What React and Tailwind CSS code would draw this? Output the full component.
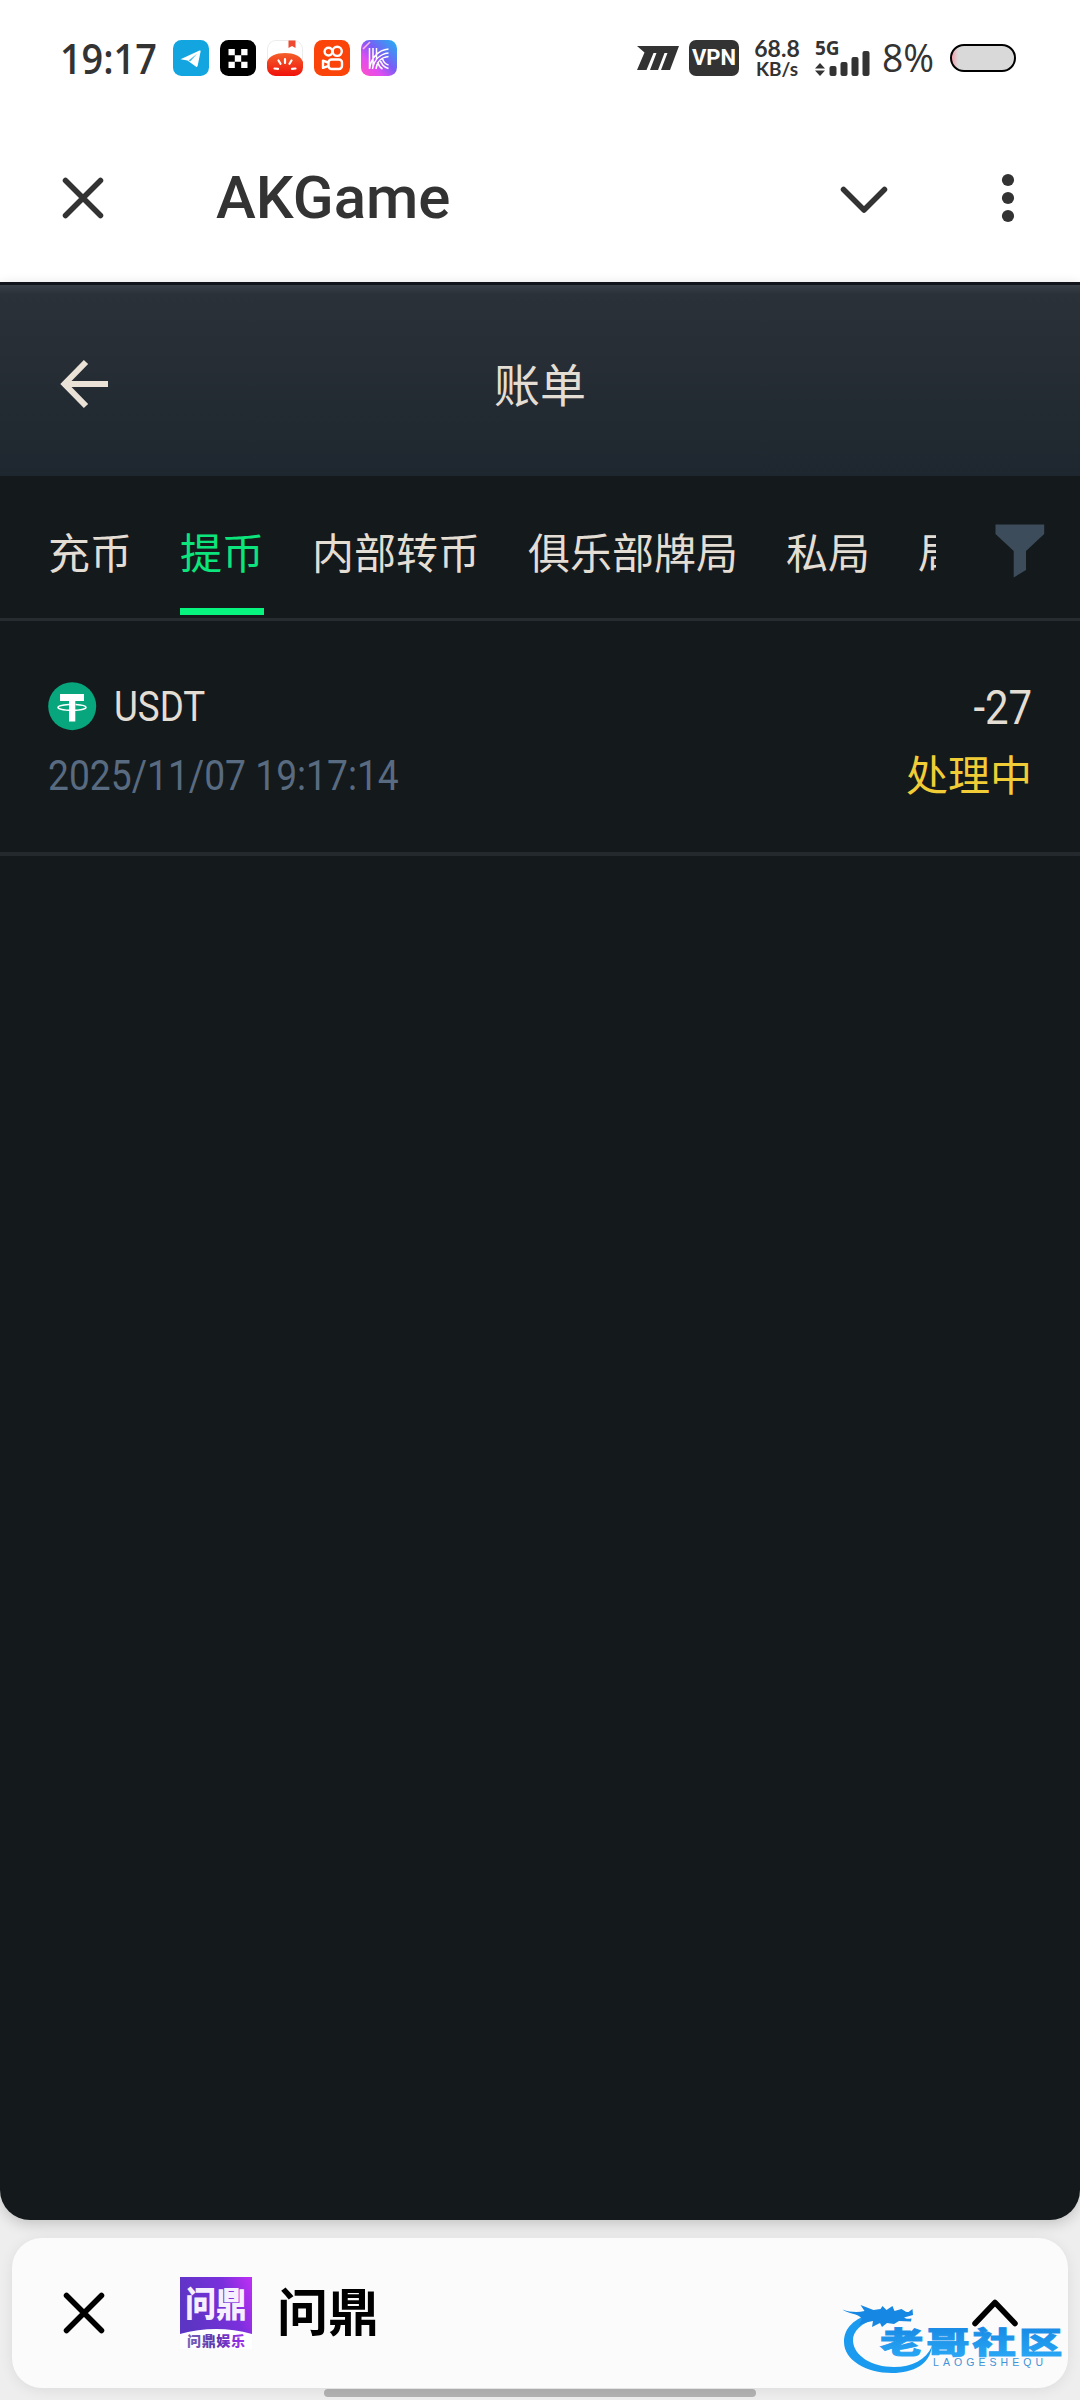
import { useState } from 'react';

const tabs = ['充币', '提币', '内部转币', '俱乐部牌局', '私局', '局'];

const records = [
  { id: 1, coin: 'USDT', time: '2025/11/07 19:17:14', amount: '-27', status: '处理中' },
];

function TelegramIcon() {
  return (
    <svg width="36" height="36" viewBox="0 0 36 36">
      <rect width="36" height="36" rx="8.5" fill="#12a5e0" />
      <path d="M7.5 19.2 26.5 10.6c.8-.3 1.3.1 1.1 1l-3 14.500c-.2.8-.8 1-1.500.6L14.500 20.600z" fill="#fff" />
      <path d="M15.500 20.500 24 13.800 17.600 21.200z" fill="#12a5e0" opacity=".75" />
    </svg>
  );
}

function OkxIcon() {
  return (
    <svg width="36" height="36" viewBox="0 0 36 36">
      <rect width="36" height="36" rx="8.5" fill="#000" />
      <path d="M8.500 9h6.300v6.300H8.500zM21.200 9h6.300v6.300h-6.300zM14.800 15.300h6.400v6.400h-6.400zM8.500 21.700h6.300V28H8.500zM21.200 21.700h6.300V28h-6.300z" fill="#fff" />
    </svg>
  );
}

function TomatoIcon() {
  return (
    <svg width="36" height="36" viewBox="0 0 36 36">
      <defs>
        <linearGradient id="tomato" x1="0" y1="0" x2="0" y2="1">
          <stop offset="0" stopColor="#f4602c" />
          <stop offset="1" stopColor="#f0120a" />
        </linearGradient>
      </defs>
      <rect x=".5" y=".5" width="35" height="35" rx="8.5" fill="#fff" stroke="#ececec" />
      <path d="M0 22C2 16 9 13 18 13s16 3 18 9v5.500a8.500 8.500 0 0 1-8.500 8.500h-19A8.500 8.500 0 0 1 0 27.500z" fill="url(#tomato)" />
      <path d="M21.500 .5h7v7.500l-3.500-2-3.500 2z" fill="#ee4a30" />
      <path d="M18 19v4M11.500 20.500l2 3.300M24.500 20.500l-2 3.300M7.500 28.500l3.500.4M28.500 28.500l-3.500.4" stroke="#fff" strokeWidth="2.2" strokeLinecap="round" />
    </svg>
  );
}

function KuaishouIcon() {
  return (
    <svg width="36" height="36" viewBox="0 0 36 36">
      <rect width="36" height="36" rx="8.5" fill="#fb4409" />
      <g fill="none" stroke="#fff" strokeWidth="2.4">
        <circle cx="14.5" cy="11.6" r="3.9" />
        <circle cx="23.2" cy="11.3" r="4.6" />
        <rect x="14.5" y="19.5" width="13.5" height="9.5" rx="3" />
        <path d="M14 22.500 9 20.700v7.200l5-1.800" strokeLinejoin="round" />
      </g>
    </svg>
  );
}

function StripedKIcon() {
  return (
    <svg width="36" height="36" viewBox="0 0 36 36">
      <defs>
        <linearGradient id="stripedK" x1="0" y1="1" x2="1" y2="0">
          <stop offset="0" stopColor="#ff4fc4" />
          <stop offset=".3" stopColor="#e04df0" />
          <stop offset=".55" stopColor="#7a5cf5" />
          <stop offset="1" stopColor="#1fb4f2" />
        </linearGradient>
      </defs>
      <rect width="36" height="36" rx="8.5" fill="url(#stripedK)" />
      <path d="M2 9 9 2" stroke="#ffb3e6" strokeWidth="1.6" />
      <g fill="none" stroke="#fff" strokeWidth="1.5">
        <path d="M8.500 8v21M12 8v18M15.500 8v11M8.500 29C10 18 17 10 27.500 9M11.500 29C13 20 19 14 27.500 13M15 29c1-7.500 6-12 12.500-12.500M19 19.500c1 4 3 7.500 8.500 9M21.500 18c.5 3.500 2.500 6 6 7M16.500 22c1 3 2.500 5.500 5 7" />
      </g>
    </svg>
  );
}

function StatusBar() {
  return (
    <div className="flex h-[116px] items-center pl-[60px] pr-[64px] text-[#333]">
      <div className="flex w-[113px] items-center">
        <span className="origin-left scale-x-[0.9] whitespace-nowrap font-['Open_Sans'] text-[42px] font-semibold leading-none">19:17</span>
      </div>
      <div className="flex gap-[11px]">
        <TelegramIcon />
        <OkxIcon />
        <TomatoIcon />
        <KuaishouIcon />
        <StripedKIcon />
      </div>

      <div className="ml-auto flex items-center">
        <svg width="42" height="24" viewBox="0 0 42 24" fill="#333">
          <path d="M0 0h42l-9 24h-9l6.500-17h-3L21 24h-8l6.500-17h-3L9.500 24H0l7.500-17.500z" />
        </svg>
        <div className="ml-[10px] flex h-9 w-[50px] items-center justify-center rounded-[7px] bg-[#333] font-[Roboto] text-[22px] font-bold leading-none text-white">
          VPN
        </div>
        <div className="ml-[13px] flex w-[50px] flex-col items-center font-[Lato] font-bold leading-none">
          <span className="whitespace-nowrap text-[23px] leading-[20px]">68.8</span>
          <span className="mt-px whitespace-nowrap text-[19px] leading-[19px]">KB/s</span>
        </div>
        <div className="ml-[13px] flex h-9 w-[56px] flex-col">
          <span className="h-4 font-['Open_Sans'] text-[19px] font-bold leading-[16px]">5G</span>
          <svg className="-mt-[6px]" width="55" height="26" viewBox="0 0 55 26" fill="#333">
            <path d="M5 13l5 5.500H0zM5 26l5-5.500H0z" />
            <rect x="14.5" y="16" width="7" height="10" rx="2" />
            <rect x="25.5" y="12" width="7" height="14" rx="2" />
            <rect x="36.5" y="7" width="7" height="19" rx="2" />
            <rect x="47.5" y="1" width="7" height="25" rx="2" />
          </svg>
        </div>
        <div className="ml-[11px] w-[56px]">
          <span className="inline-block origin-left scale-x-[0.98] whitespace-nowrap font-['Open_Sans'] text-[38px] font-medium leading-none">8%</span>
        </div>
        <div className="ml-3 h-7 w-[66px] rounded-full border-[2.5px] border-black bg-gradient-to-r from-[#f0a0ac] from-0% to-[#d9d9d9] to-10%" />
      </div>
    </div>
  );
}

function CloseIcon({ color }) {
  return (
    <svg width="42" height="42" viewBox="0 0 42 42" fill="none" stroke={color} strokeWidth="5.5" strokeLinecap="round">
      <path d="M3.500 3.500l35 35M38.500 3.500l-35 35" />
    </svg>
  );
}

function TitleBar() {
  return (
    <div className="flex h-[166px] items-center pb-0.5 pl-[62px] pr-[65px]">
      <CloseIcon color="#333" />
      <h1 className="ml-[112px] font-[Roboto] text-[60px] font-medium leading-none text-[#333]">AKGame</h1>
      <svg className="ml-auto mt-1" width="48" height="28" viewBox="0 0 48 28" fill="none" stroke="#333" strokeWidth="5.5" strokeLinecap="round" strokeLinejoin="round">
        <path d="M3.500 3.500 24 24 44.500 3.500" />
      </svg>
      <svg className="ml-[113px]" width="14" height="50" viewBox="0 0 14 50" fill="#333">
        <circle cx="7" cy="7" r="6.1" />
        <circle cx="7" cy="25" r="6.1" />
        <circle cx="7" cy="43" r="6.1" />
      </svg>
    </div>
  );
}

function TetherIcon() {
  return (
    <svg width="49" height="49" viewBox="0 0 49 49">
      <circle cx="24.2" cy="24.2" r="24" fill="#07a67c" />
      <path d="M12 12h24v7h-8.700v20.500h-6.300V19h-9z" fill="#fff" />
      <path d="M21 22.500C14 23 10 24 10 25.300c0 1.700 6 3 14 3s14-1.300 14-3c0-1.300-3.500-2.300-10.500-2.800" fill="none" stroke="#fff" strokeWidth="1.5" />
    </svg>
  );
}

function BillPage() {
  const [active, setActive] = useState(1);

  return (
    <main className="flex h-[1938px] flex-col overflow-hidden rounded-b-[30px] border-t-[3px] border-[#12151b] bg-[#14191c] font-[Roboto,'Noto_Sans_CJK_SC',sans-serif] text-[#e3ddd3] shadow-[0_4px_14px_rgba(0,0,0,0.18)]">
      <header className="grid h-[191px] shrink-0 grid-cols-[1fr_auto_1fr] items-center bg-[linear-gradient(180deg,#394047_0px,#2a3138_9px,#262d34_80px,#1e272f_100%)] px-[60px]">
        <svg className="mt-[6px]" width="49" height="50" viewBox="0 0 49 50" fill="none" stroke="#ebe2d7" strokeWidth="6">
          <path d="M26 3 4.500 25 26 47M4.500 25H48" />
        </svg>
        <h2 className="mt-[10px] text-[46px] leading-none">账单</h2>
        <span />
      </header>

      <nav className="flex h-[145px] shrink-0 items-start border-b-[3px] border-[#272c30] pl-12">
        <div className="flex h-[139px] w-[888px] gap-12 overflow-hidden">
          {tabs.map((tab, i) => (
            <button
              key={tab}
              onClick={() => setActive(i)}
              className={
                i === active
                  ? 'h-full shrink-0 border-b-[7px] border-[#07f57f] pt-[25px] text-[42px] leading-none text-[#0be57c]'
                  : 'h-full shrink-0 border-b-[7px] border-transparent pt-[25px] text-[42px] leading-none'
              }
            >
              {tab}
            </button>
          ))}
        </div>
        <svg className="ml-[59px] mt-12" width="50" height="54" viewBox="0 0 50 54" fill="#3c4c5b">
          <path d="M.5.500h48.700v9.500L31 27v19L18.700 53.500V27L.5 10z" />
        </svg>
      </nav>

      {records.map((r) => (
        <div key={r.id} className="flex h-[235px] shrink-0 justify-between border-b-4 border-[#24292d] px-12 pt-[61px]">
          <div className="flex flex-col">
            <div className="flex h-[49px] items-center gap-[17px]">
              <TetherIcon />
              <span className="origin-left scale-x-[0.875] text-[42px] leading-none">{r.coin}</span>
            </div>
            <span className="mt-5 origin-left scale-x-[0.886] whitespace-nowrap text-[42px] leading-[50px] text-[#596b80]">{r.time}</span>
          </div>
          <div className="flex flex-col items-end">
            <span className="mt-px origin-right scale-x-[0.875] text-[48px] leading-[49px]">{r.amount}</span>
            <span className="mt-5 text-[42px] leading-[50px] text-[#f0cd36]">{r.status}</span>
          </div>
        </div>
      ))}
    </main>
  );
}

function AppBadge() {
  return (
    <svg width="72" height="72" viewBox="0 0 72 72" fontFamily="Noto Sans CJK SC, sans-serif" fontWeight="900" textAnchor="middle">
      <defs>
        <linearGradient id="badge" x1="0" y1=".3" x2="1" y2="0">
          <stop offset="0" stopColor="#5d35c4" />
          <stop offset=".6" stopColor="#7a2fdc" />
          <stop offset="1" stopColor="#c02ff5" />
        </linearGradient>
        <linearGradient id="badgeText">
          <stop offset="0" stopColor="#7a66b8" />
          <stop offset=".5" stopColor="#5a35b0" />
          <stop offset="1" stopColor="#a030f0" />
        </linearGradient>
      </defs>
      <rect width="72" height="72" fill="#fff" />
      <path d="M0 0h72v57Q36 47 0 57z" fill="url(#badge)" />
      <g transform="translate(36 39.5) scale(.93 1.06)">
        <text fontSize="33" fill="#f6effd">问鼎</text>
      </g>
      <text x="36" y="68.5" fontSize="14" textLength="58" fill="url(#badgeText)">问鼎娱乐</text>
    </svg>
  );
}

function Watermark() {
  return (
    <svg width="224" height="80" viewBox="0 0 224 80">
      <defs>
        <linearGradient id="mark" x1="0" y1="0" x2="0" y2="1">
          <stop offset="0" stopColor="#1482e0" />
          <stop offset="1" stopColor="#2aaaf6" />
        </linearGradient>
      </defs>
      <path d="M32 13C12 18 2 28 2 42c0 18 22 31 48 31 22 0 38-9 40-27-6 14-20 21-38 21-22 0-40-11-41-26-.5-10 8-18 25-23z" fill="#1b9bf0" />
      <path d="M.5 9.500c8 3 16 3 22 1.500l-4-6 13 5 7-1 2-3 4 4 6-4 2 5 7-2c5 3 4 3 7 3l4-3 .5 6-9 2.500c2 1.500 4 1.500 7.500 1l-.5 3-12-.5-5 3-7-1-5 4-2-4-8 4 1-6-5 1-9 3 3-6C16 13 6 14 .5 9.500z" fill="#1687e2" />
      <g transform="translate(38 52.5) scale(1.47 1)">
        <text fontSize="29.5" fontWeight="900" letterSpacing="2" fontFamily="Noto Sans CJK SC, sans-serif" fill="url(#mark)" stroke="url(#mark)" strokeWidth=".9">老哥社区</text>
      </g>
      <text x="91" y="66" fontSize="10.5" fontFamily="Liberation Sans, sans-serif" textLength="110" fill="#3f93d8">LAOGESHEQU</text>
    </svg>
  );
}

function MiniAppBar() {
  return (
    <footer className="relative mx-3 mt-[18px] flex h-[150px] items-center rounded-[30px] bg-[#fbfbfb] pl-[51px] pr-[50px] shadow-[0_2px_14px_rgba(0,0,0,0.08)]">
      <CloseIcon color="#000" />
      <div className="ml-[75px]">
        <AppBadge />
      </div>
      <span className="-mt-[7px] ml-[25px] font-['Noto_Sans_CJK_SC',sans-serif] text-[51px] font-bold leading-none text-black">问鼎</span>
      <div className="absolute right-[2px] top-[62px]">
        <Watermark />
      </div>
      <svg className="relative ml-auto" width="46" height="28" viewBox="0 0 46 28" fill="none" stroke="#000" strokeWidth="5.5" strokeLinecap="round" strokeLinejoin="round">
        <path d="M3 24.500 23 3.500 43 24.500" />
      </svg>
    </footer>
  );
}

export default function App() {
  return (
    <div className="flex h-[2400px] w-[1080px] flex-col overflow-hidden bg-[#eeeeee]">
      <div className="bg-white">
        <StatusBar />
        <TitleBar />
      </div>
      <BillPage />
      <MiniAppBar />
      <div className="mx-auto mt-px h-2 w-[432px] rounded-full bg-[#b3b3b3]" />
    </div>
  );
}
